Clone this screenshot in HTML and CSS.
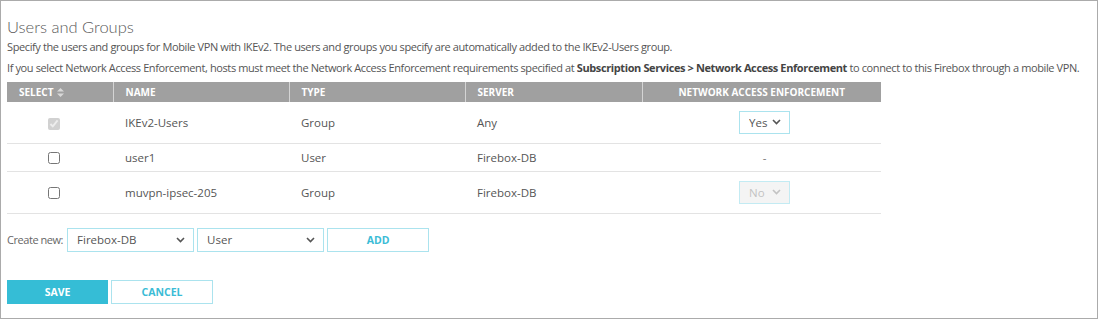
FILE: index.html
```html
<!DOCTYPE html>
<html>
<head>
<meta charset="utf-8">
<link rel="stylesheet" href="styles.css">
</head>
<body>
<div class="frame">
  <h1 class="title">Users and Groups</h1>
  <p class="desc">Specify the users and groups for Mobile VPN with IKEv2. The users and groups you specify are automatically added to the IKEv2-Users group.</p>
  <p class="desc">If you select Network Access Enforcement, hosts must meet the Network Access Enforcement requirements specified at <b>Subscription Services &gt; Network Access Enforcement</b> to connect to this Firebox through a mobile VPN.</p>
  <table class="grid">
    <thead>
      <tr>
        <th class="c-sel">SELECT <svg class="sort" width="7" height="9" viewBox="0 0 7 9"><path d="M3.5 0 L7 3.6 H0 Z M3.5 9 L7 5.4 H0 Z" fill="#d8d8d8"/></svg></th>
        <th class="c-name">NAME</th>
        <th class="c-type">TYPE</th>
        <th class="c-srv">SERVER</th>
        <th class="c-nae">NETWORK ACCESS ENFORCEMENT</th>
      </tr>
    </thead>
    <tbody>
      <tr class="tall">
        <td class="chk"><input type="checkbox" checked disabled></td>
        <td>IKEv2-Users</td>
        <td>Group</td>
        <td>Any</td>
        <td class="nae"><select class="sel small"><option>Yes</option><option>No</option></select></td>
      </tr>
      <tr class="short">
        <td class="chk"><input type="checkbox"></td>
        <td>user1</td>
        <td>User</td>
        <td>Firebox-DB</td>
        <td class="nae dash">-</td>
      </tr>
      <tr class="tall last">
        <td class="chk"><input type="checkbox"></td>
        <td>muvpn-ipsec-205</td>
        <td>Group</td>
        <td>Firebox-DB</td>
        <td class="nae"><select class="sel small" disabled><option>No</option><option>Yes</option></select></td>
      </tr>
    </tbody>
  </table>
  <div class="create">
    <span class="create-label">Create new:</span>
    <select class="sel wide"><option>Firebox-DB</option></select>
    <select class="sel wide"><option>User</option><option>Group</option></select>
    <button class="btn outline">ADD</button>
  </div>
  <div class="actions">
    <button class="btn primary">SAVE</button>
    <button class="btn outline">CANCEL</button>
  </div>
</div>
</body>
</html>
```

FILE: styles.css
```css
* { box-sizing: border-box; }
html, body { margin: 0; padding: 0; background: #fff; }
body {
  font-family: "Open Sans", "Noto Sans", sans-serif;
  font-size: 11px;
  color: #555;
}
.frame {
  width: 1098px;
  height: 319px;
  border: 1px solid #ababab;
  padding: 15px 6px 0 6px;
}
.title {
  margin: 0;
  font-family: "Lato", "Open Sans", sans-serif;
  font-weight: 300;
  font-size: 16.5px;
  line-height: 22px;
  color: #5a5a5a;
}
.desc {
  margin: 0;
  font-size: 11px;
  line-height: 18px;
  color: #555;
  letter-spacing: -0.39px;
  white-space: nowrap;
}
.desc + .desc { margin-top: 3px; }
.desc b { font-weight: 700; color: #444; }
.grid {
  margin-top: 5px;
  width: 874px;
  border-collapse: collapse;
  font-size: 11.5px;
}
.grid th {
  background: #a0a0a0;
  color: #fff;
  font-weight: 700;
  font-size: 10px;
  text-align: left;
  height: 20px;
  padding: 0 0 0 12px;
  border-left: 1px solid #d4d4d4;
}
.grid th:first-child { border-left: none; }
.grid th.c-nae { text-align: center; padding-left: 0; }
.c-sel { width: 106px; }
.c-name { width: 176px; }
.c-type { width: 176px; }
.c-srv { width: 177px; }
.sort { vertical-align: -1px; margin-left: 1px; }
.grid td {
  padding: 0 0 0 12px;
  border-bottom: 1px solid #e3e3e3;
  color: #555;
}
.grid td.chk { text-align: center; padding: 0 12px 0 0; }
.grid td.nae { text-align: center; padding: 0 0 0 6px; }
.grid td.dash { color: #777; }
.tall td { height: 41px; }
.short td { height: 28px; }
.last td { height: 42px; }
input[type=checkbox] {
  margin: 0;
  width: 12px;
  height: 12px;
  vertical-align: middle;
}
.sel {
  appearance: none;
  -webkit-appearance: none;
  font-family: "Open Sans", "Noto Sans", sans-serif;
  font-size: 11.5px;
  color: #555;
  background: #fff url("data:image/svg+xml;utf8,<svg xmlns='http://www.w3.org/2000/svg' width='9' height='6' viewBox='0 0 9 6'><path d='M1 1 L4.5 4.5 L8 1' fill='none' stroke='%23555' stroke-width='1.6'/></svg>") no-repeat right 8px center;
  border: 1px solid #abe3ee;
  border-radius: 0;
  height: 23px;
  padding: 0 0 0 9px;
  outline: none;
}
.sel.small { width: 51px; vertical-align: middle; }
.sel:disabled {
  background-color: #f0f0f0;
  color: #aaa;
  background-image: url("data:image/svg+xml;utf8,<svg xmlns='http://www.w3.org/2000/svg' width='9' height='6' viewBox='0 0 9 6'><path d='M1 1 L4.5 4.5 L8 1' fill='none' stroke='%23aaa' stroke-width='1.6'/></svg>");
}
.sel.wide { width: 127px; height: 24px; }
.create {
  display: flex;
  align-items: center;
  gap: 3px;
  margin-top: 14px;
}
.create-label { margin-right: 1px; color: #666; font-size: 11px; letter-spacing: -0.45px; }
.btn {
  font-family: "Open Sans", "Noto Sans", sans-serif;
  font-weight: 700;
  font-size: 10.5px;
  height: 24px;
  width: 102px;
  border-radius: 0;
  cursor: pointer;
  padding: 0;
}
.btn.outline {
  background: #fff;
  border: 1px solid #abe3ee;
  color: #3bbcd6;
}
.btn.primary {
  background: #35bdd6;
  border: 1px solid #35bdd6;
  color: #fff;
}
.actions {
  display: flex;
  gap: 3px;
  margin-top: 28px;
}
.actions .btn.primary { width: 101px; }
```
